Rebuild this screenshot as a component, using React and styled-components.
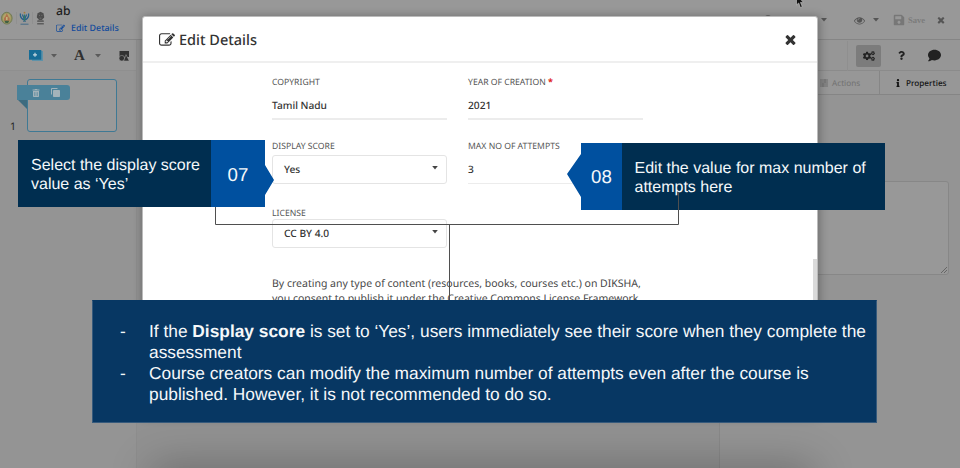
import React from 'react';
import styled, { createGlobalStyle } from 'styled-components';
import { FaCogs, FaQuestion, FaComment, FaInfo, FaSave, FaTrashAlt } from 'react-icons/fa';

const Global = createGlobalStyle`
  * { box-sizing: border-box; }
  body { margin: 0; overflow: hidden; font-family: "Noto Sans", "Open Sans", sans-serif; color: #2b2b2b; text-rendering: geometricPrecision; }
  svg { display: block; flex: none; }
`;

const Screen = styled.div`
  position: relative;
  width: 960px;
  height: 468px;
  overflow: hidden;
  background: #949494;
  display: flex;
  flex-direction: column;
`;

const Header = styled.header`
  height: 40px;
  flex: none;
  display: flex;
  background: #989898;
  border-bottom: 1px solid #858585;
`;
const Logos = styled.div`
  display: flex;
  align-items: flex-start;
  padding: 11px 0 0 1px;
  width: 56px;
`;
const DocTitle = styled.div`
  font-size: 12.2px;
  font-weight: 500;
  line-height: 16px;
  padding-top: 3px;
  color: #1e1e1e;
  flex: 1;
`;
const EditLink = styled.div`
  display: flex;
  align-items: center;
  gap: 6px;
  color: #114a9c;
  font-size: 8.9px;
  font-weight: 500;
  line-height: 16px;
  margin-top: 1px;
`;
const HeaderActions = styled.div`
  width: 145px;
  display: flex;
  align-items: center;
  padding-top: 1px;
  color: #555;
`;
const Spacer = styled.span`
  width: ${(p) => p.$w}px;
  flex: none;
`;
const SaveLabel = styled.span`
  font: bold 8.6px/12px "Liberation Serif", serif;
  color: #7b7b7b;
  width: 20px;
`;

const Workspace = styled.div`
  flex: 1;
  display: flex;
`;
const Slides = styled.aside`
  width: 137px;
  display: flex;
  flex-direction: column;
  border-right: 1px solid #8d8d8d;
  background: #949494;
`;
const Toolbar = styled.div`
  height: 31px;
  display: flex;
  align-items: center;
  padding: 1px 0 0 29px;
  background: #979797;
  border-bottom: 1px solid #8f8f8f;
  color: #5b5b5b;
`;
const FontTool = styled.span`
  font: bold 15px/20px "Liberation Serif", serif;
  color: #303030;
  width: 12px;
`;
const SlideRow = styled.div`
  display: flex;
  margin-top: 8px;
  padding-left: 10px;
  align-items: flex-end;
`;
const SlideNumber = styled.span`
  width: 17px;
  font-size: 10.5px;
  line-height: 10px;
  color: #242424;
`;
const Thumb = styled.div`
  position: relative;
  width: 90px;
  height: 53px;
  border: 1px solid #3f7994;
  border-radius: 3px;
  background: #999;
`;
const ThumbRibbon = styled.div`
  position: absolute;
  left: -11px;
  top: 5px;
  width: 53px;
  height: 15px;
  background: #4a8199;
  border-radius: 0 3px 3px 0;
  display: flex;
  align-items: center;
  gap: 11px;
  padding-left: 15px;
  color: #a3b3ba;
`;
const RibbonFold = styled.div`
  position: absolute;
  left: -11px;
  top: 19px;
  width: 10px;
  height: 10px;
  background: #3d6b7f;
  clip-path: polygon(0 0, 100% 0, 100% 100%);
`;
const Stage = styled.main`
  flex: 1;
  background: #919191;
`;
const SidePanel = styled.aside`
  width: 241px;
  border-left: 1px solid #888;
  display: flex;
  flex-direction: column;
`;
const PanelTools = styled.div`
  height: 31px;
  display: flex;
  align-items: center;
  padding: 1px 0 0 127px;
  border-bottom: 1px solid #8b8b8b;
  background: #969696;
  color: #222;
`;
const Divider = styled.span`
  width: 1px;
  height: 30px;
  margin-right: 8px;
  background: #8f8f8f;
`;
const ActiveTool = styled.div`
  width: 25px;
  height: 22px;
  display: grid;
  place-items: center;
  background: #7c7c7c;
  border-radius: 2px;
  margin-right: 16px;
`;
const Tabs = styled.div`
  height: 24px;
  display: flex;
  border-bottom: 1px solid #858585;
  background: #979797;
  font-size: 8.2px;
`;
const Tab = styled.div`
  width: ${(p) => p.$w}px;
  padding: 1px 0 0 ${(p) => p.$indent}px;
  display: flex;
  align-items: center;
  gap: ${(p) => p.$gap}px;
  color: ${(p) => (p.$active ? '#111' : '#717171')};
  font-weight: ${(p) => (p.$active ? 500 : 400)};
  border-left: ${(p) => (p.$active ? '1px solid #868686' : '0')};
`;
const NotesBox = styled.div`
  display: flex;
  justify-content: flex-end;
  align-items: flex-end;
  height: 94px;
  width: 200px;
  margin: 86px 0 0 29px;
  background: #989898;
  border: 1px solid #878787;
  border-radius: 3px;
`;
const BottomShade = styled.div`
  position: absolute;
  left: 160px;
  top: 474px;
  width: 645px;
  height: 20px;
  box-shadow: 0 0 42px 8px rgba(0, 0, 0, 0.28);
`;

const Modal = styled.section`
  position: absolute;
  left: 142px;
  top: 16px;
  width: 676px;
  height: 400px;
  background: #fff;
  border: 1px solid #bbb;
  border-radius: 3px;
  box-shadow: 1px 1px 8px 1px rgba(0, 0, 0, 0.27);
  display: flex;
  flex-direction: column;
`;
const ModalBody = styled.div`
  flex: 1;
  display: flex;
`;
const ModalHeader = styled.div`
  height: 46px;
  flex: none;
  display: flex;
  align-items: center;
  padding: 1px 19px 0 16px;
  border-bottom: 2px solid #efefef;
  color: #333;
`;
const ModalTitle = styled.h1`
  margin: 0 auto 0 4px;
  font-size: 14.5px;
  line-height: 22px;
  font-weight: 500;
`;
const Form = styled.div`
  flex: 1;
  padding: 12px 0 0 129px;
`;
const FieldGrid = styled.div`
  display: grid;
  grid-template-columns: 175px 175px;
  column-gap: 21px;
  grid-template-rows: 64px 67px 71px;
`;
const Label = styled.div`
  font-size: 8.65px;
  height: 15px;
  line-height: 14px;
  color: #555;
  white-space: nowrap;
`;
const Required = styled.span`
  color: #e02020;
  font-weight: 700;
  font-size: 9px;
  line-height: 8px;
`;
const Value = styled.div`
  font-size: 10.2px;
  line-height: 16px;
  height: 30px;
  padding-top: 7px;
  border-bottom: ${(p) => (p.$thin ? 1 : 2)}px solid #ececec;
  font-weight: 500;
  color: #333;
`;
const Select = styled.div`
  display: flex;
  justify-content: space-between;
  height: 29px;
  margin-top: ${(p) => p.$top}px;
  padding: ${(p) => p.$inset}px 8px 0 11px;
  border: 1px solid #e4e4e4;
  border-radius: 3px;
  font-size: 10.2px;
  line-height: 16px;
  font-weight: 500;
  color: #333;
`;
const Consent = styled.p`
  margin: 0;
  font-size: 10.5px;
  line-height: 14.5px;
  color: #484848;
  white-space: nowrap;
`;
const ScrollThumb = styled.div`
  width: 4px;
  height: 100px;
  margin-top: 196px;
  background: #dadada;
`;

const Callout = styled.div`
  position: absolute;
  left: ${(p) => p.$x}px;
  top: ${(p) => p.$y}px;
  height: 67px;
  display: flex;
  color: #f4f8fa;
  font-family: "Liberation Sans", Arial, sans-serif;
`;
const CalloutText = styled.div`
  width: ${(p) => p.$w}px;
  padding: 16px 0 0 ${(p) => p.$indent}px;
  background: #002e50;
  font-size: 16px;
  line-height: 19px;
  white-space: pre-line;
`;
const Step = styled.div`
  width: ${(p) => p.$w}px;
  padding: ${(p) => p.$pad};
  background: #00509f;
  font-size: 18.7px;
  line-height: 22px;
  clip-path: ${(p) => p.$shape};
`;
const Connectors = styled.svg`
  position: absolute;
  left: 0;
  top: 0;
  pointer-events: none;
`;
const NotePanel = styled.ul`
  position: absolute;
  left: 92px;
  top: 300px;
  width: 785px;
  height: 123px;
  margin: 0;
  padding: 20px 0 0 27px;
  list-style: none;
  background: #073763;
  border: 1px solid #365a7c;
  border-top-color: #073763;
  color: #f5f8fa;
  font: 17.33px/21px "Liberation Sans", Arial, sans-serif;
`;
const NoteItem = styled.li`
  display: grid;
  grid-template-columns: 29px 1fr;
`;
const NoteLine = styled.div`
  white-space: nowrap;
`;
const Pointer = styled.svg`
  position: absolute;
  left: 795px;
  top: -5px;
`;
const AccountIcon = styled.svg`
  position: absolute;
  left: 763px;
  top: 14px;
`;

const glyphs = {
  edit: 'M888 1184l116-116-152-152-116 116v56h96v96h56zm440-720q-16-16-33 1l-350 350q-17 17-1 33t33-1l350-350q17-17 1-33zm80 594v190q0 119-84.5 203.5t-203.5 84.5h-832q-119 0-203.5-84.5t-84.5-203.5v-832q0-119 84.5-203.5t203.5-84.5h832q63 0 117 25 15 7 18 23 3 17-9 29l-49 49q-14 14-32 8-23-6-45-6h-832q-66 0-113 47t-47 113v832q0 66 47 113t113 47h832q66 0 113-47t47-113v-126q0-13 9-22l64-64q15-15 35-7t20 29zm-96-738l288 288-672 672h-288v-288zm444 132l-92 92-288-288 92-92q28-28 68-28t68 28l152 152q28 28 28 68t-28 68z',
  close: 'M1490 1322q0 40-28 68l-136 136q-28 28-68 28t-68-28l-294-294-294 294q-28 28-68 28t-68-28l-136-136q-28-28-28-68t28-68l294-294-294-294q-28-28-28-68t28-68l136-136q28-28 68-28t68 28l294 294 294-294q28-28 68-28t68 28l136 136q28 28 28 68t-28 68l-294 294 294 294q28 28 28 68z',
  eye: 'M1664 960q-152-236-381-353 61 104 61 225 0 185-131.5 316.5t-316.5 131.5-316.5-131.5-131.5-316.5q0-121 61-225-229 117-381 353 133 205 333.5 326.5t434.5 121.5 434.5-121.5 333.5-326.5zm-720-384q0-20-14-34t-34-14q-125 0-214.5 89.5t-89.5 214.5q0 20 14 34t34 14 34-14 14-34q0-86 61-147t147-61q20 0 34-14t14-34zm848 384q0 34-20 69-140 230-376.5 368.5t-499.5 138.5-499.5-139-376.5-368q-20-35-20-69t20-69q140-229 376.5-368t499.5-139 499.5 139 376.5 368q20 35 20 69z',
};
const Glyph = ({ name, size }) => (
  <svg width={size} height={size} viewBox="0 0 1792 1792" fill="currentColor"><path d={glyphs[name]} /></svg>
);
const Caret = () => (
  <svg width="6" height="4" viewBox="0 0 6 4" fill="currentColor"><path d="M0 0h6L3 3.5z" /></svg>
);
const Chevron = () => (
  <svg width="6" height="12" viewBox="0 0 6 12"><path d="M.2 5h5.6L3 8.4z" fill="#444" /></svg>
);

const BrandMarks = () => (
  <svg width="46" height="15" viewBox="0 0 46 15">
    <ellipse cx="5.8" cy="7.2" rx="5.3" ry="5.9" fill="#96935f" stroke="#727b55" strokeWidth="1" />
    <ellipse cx="5.8" cy="7" rx="3.9" ry="4.5" fill="#b3a468" />
    <path d="M5.8 2.2 8 7H3.6zM3 6.5h5.6v3.3H3z" fill="#b0714d" />
    <path d="M5 6h1.6v3H5z" fill="#c3b47c" />
    <path d="M3.2 9.7h5.2L7 12H4.6z" fill="#3f6043" />
    <path d="M15.5 1v12M31.5 1v12" stroke="#8c8c8c" strokeWidth=".7" />
    <path d="M19.4 2.6v2.2q.8 3.2 4.1 4.4 3.3-1.2 4.1-4.4V2.6M21.4 3.6l2.1 4.8 2.1-4.8" fill="none" stroke="#27618b" strokeWidth="1.3" />
    <circle cx="23.5" cy="1.7" r=".9" fill="#a77b39" /><path d="M23.5 3.5v6.5" stroke="#347d61" strokeWidth="1" />
    <path d="M22 10.3h3M19.5 13.2h8" stroke="#3c6685" strokeWidth=".9" />
    <path d="M36.3 2.4 38 1.5 39.5.7l1.5.8 1.7.9v1.7l.4.6v2l-1.8 1.5v1.2h1.5v1.4h-6.6v-1.4h1.5V8.2l-1.8-1.5v-2l.4-.6z" fill="#4d4d4d" />
    <path d="M38 4.4h1M40.3 4.4h1M38.6 7.2h1.8M38 9.4h3" stroke="#777" strokeWidth=".8" />
    <path d="M36.2 12.8h6.6" stroke="#4e4e4e" strokeWidth="1.2" />
  </svg>
);

export default function App() {
  return (
    <Screen>
      <Global />
      <Header>
        <Logos><BrandMarks /></Logos>
        <DocTitle>
          ab
          <EditLink><Glyph name="edit" size={9} />Edit Details</EditLink>
        </DocTitle>
        <HeaderActions>
          <Spacer $w={6} /><Caret /><Spacer $w={27} />
          <Glyph name="eye" size={11} /><Spacer $w={8} /><Caret /><Spacer $w={14} />
          <FaSave size={12} color="#777" /><Spacer $w={3} /><SaveLabel>Save</SaveLabel><Spacer $w={8} />
          <Glyph name="close" size={10} />
        </HeaderActions>
      </Header>

      <Workspace>
        <Slides>
          <Toolbar>
            <svg width="14" height="11" viewBox="0 0 14 11"><path d="M3 1h11v10H3" fill="#5e92a9" /><path d="M0 0h12.3v9.7H0z" fill="#166c96" /><path d="M4 4.8h4M6 2.8v4" stroke="#c1d5de" strokeWidth="1.2" /></svg>
            <Spacer $w={8} /><Caret /><Spacer $w={17} />
            <FontTool>A</FontTool><Spacer $w={9} /><Caret /><Spacer $w={18} />
            <svg width="10" height="10" viewBox="0 0 10 10" fill="#333"><path d="M.5 0H10v6H.5z" /><circle cx="2.8" cy="7.2" r="2.8" stroke="#979797" strokeWidth=".6" /><path d="m7 3.6 3.3 6.4H4.6z" stroke="#979797" strokeWidth=".6" /></svg>
          </Toolbar>
          <SlideRow>
            <SlideNumber>1</SlideNumber>
            <Thumb>
              <RibbonFold />
              <ThumbRibbon>
                <FaTrashAlt size={8} />
                <svg width="9" height="9" viewBox="0 0 9 9"><path d="M.5 6.5v-6h6" fill="none" stroke="currentColor" /><rect x="2" y="2" width="7" height="7" rx=".8" fill="currentColor" /></svg>
              </ThumbRibbon>
            </Thumb>
          </SlideRow>
        </Slides>
        <Stage />
        <SidePanel>
          <PanelTools>
            <Divider />
            <ActiveTool><FaCogs size={12} /></ActiveTool>
            <FaQuestion size={9} /><Spacer $w={22} /><FaComment size={13} />
          </PanelTools>
          <Tabs>
            <Tab $w={159} $indent={100} $gap={4}>
              <svg width="8" height="8" viewBox="0 0 8 8" stroke="currentColor"><path d="M0 1h8M0 3h8M0 5h8M0 7h8M5 0v4M3 4v4" /></svg>
              Actions
            </Tab>
            <Tab $w={81} $indent={14} $gap={4} $active><FaInfo size={8} />Properties</Tab>
          </Tabs>
          <NotesBox>
            <svg width="8" height="8" viewBox="0 0 8 8" stroke="#606060" strokeWidth=".9"><path d="m1 7 6-6M4 7l3-3" /></svg>
          </NotesBox>
        </SidePanel>
      </Workspace>

      <BottomShade />
      <AccountIcon width="10" height="10" viewBox="0 0 10 10"><circle cx="5" cy="4" r="3" fill="#666" /></AccountIcon>
      <Modal>
        <ModalHeader>
          <Glyph name="edit" size={16} />
          <ModalTitle>Edit Details</ModalTitle>
          <Glyph name="close" size={15} />
        </ModalHeader>
        <ModalBody>
          <Form>
            <FieldGrid>
              <div><Label>COPYRIGHT</Label><Value>Tamil Nadu</Value></div>
              <div><Label>YEAR OF CREATION <Required>*</Required></Label><Value>2021</Value></div>
              <div><Label>DISPLAY SCORE</Label><Select $top={1} $inset={5}>Yes<Chevron /></Select></div>
              <div><Label>MAX NO OF ATTEMPTS</Label><Value $thin>3</Value></div>
              <div><Label>LICENSE</Label><Select $top={-2} $inset={5}>CC BY 4.0<Chevron /></Select></div>
            </FieldGrid>
            <Consent>
              By creating any type of content (resources, books, courses etc.) on DIKSHA,<br />
              you consent to publish it under the Creative Commons License Framework.
            </Consent>
          </Form>
          <ScrollThumb />
        </ModalBody>
      </Modal>

      <Callout $x={18} $y={140}>
        <CalloutText $w={193} $indent={13}>{'Select the display score\nvalue as ‘Yes’'}</CalloutText>
        <Step $w={63} $pad="24px 0 0 16.5px" $shape="polygon(0 0, 54px 0, 54px 25px, 63px 40px, 54px 55px, 54px 100%, 0 100%)">07</Step>
      </Callout>
      <Callout $x={567} $y={143}>
        <Step $w={55} $pad="23px 0 0 24px" $shape="polygon(14px 0, 100% 0, 100% 100%, 14px 100%, 14px 54px, 0 31px, 14px 11px)">08</Step>
        <CalloutText $w={263} $indent={12.5}>{'Edit the value for max number of\nattempts here'}</CalloutText>
      </Callout>
      <Connectors width="960" height="468" viewBox="0 0 960 468">
        <path d="M215.5 207v17.5H678.5V192M449.5 224v76" fill="none" stroke="#4f4f4f" strokeWidth="1" />
      </Connectors>
      <NotePanel>
        <NoteItem>
          <span>-</span>
          <div>
            <NoteLine>If the <b>Display score</b> is set to ‘Yes’, users immediately see their score when they complete the</NoteLine>
            <NoteLine>assessment</NoteLine>
          </div>
        </NoteItem>
        <NoteItem>
          <span>-</span>
          <div>
            <NoteLine>Course creators can modify the maximum number of attempts even after the course is</NoteLine>
            <NoteLine>published. However, it is not recommended to do so.</NoteLine>
          </div>
        </NoteItem>
      </NotePanel>
      <Pointer width="10" height="14" viewBox="0 0 10 14"><path d="M1.5 0v10l2.2-2 1.6 4.5 2-.8-1.8-4.3h3z" fill="#111" stroke="#bbb" strokeWidth=".7" /></Pointer>
    </Screen>
  );
}
